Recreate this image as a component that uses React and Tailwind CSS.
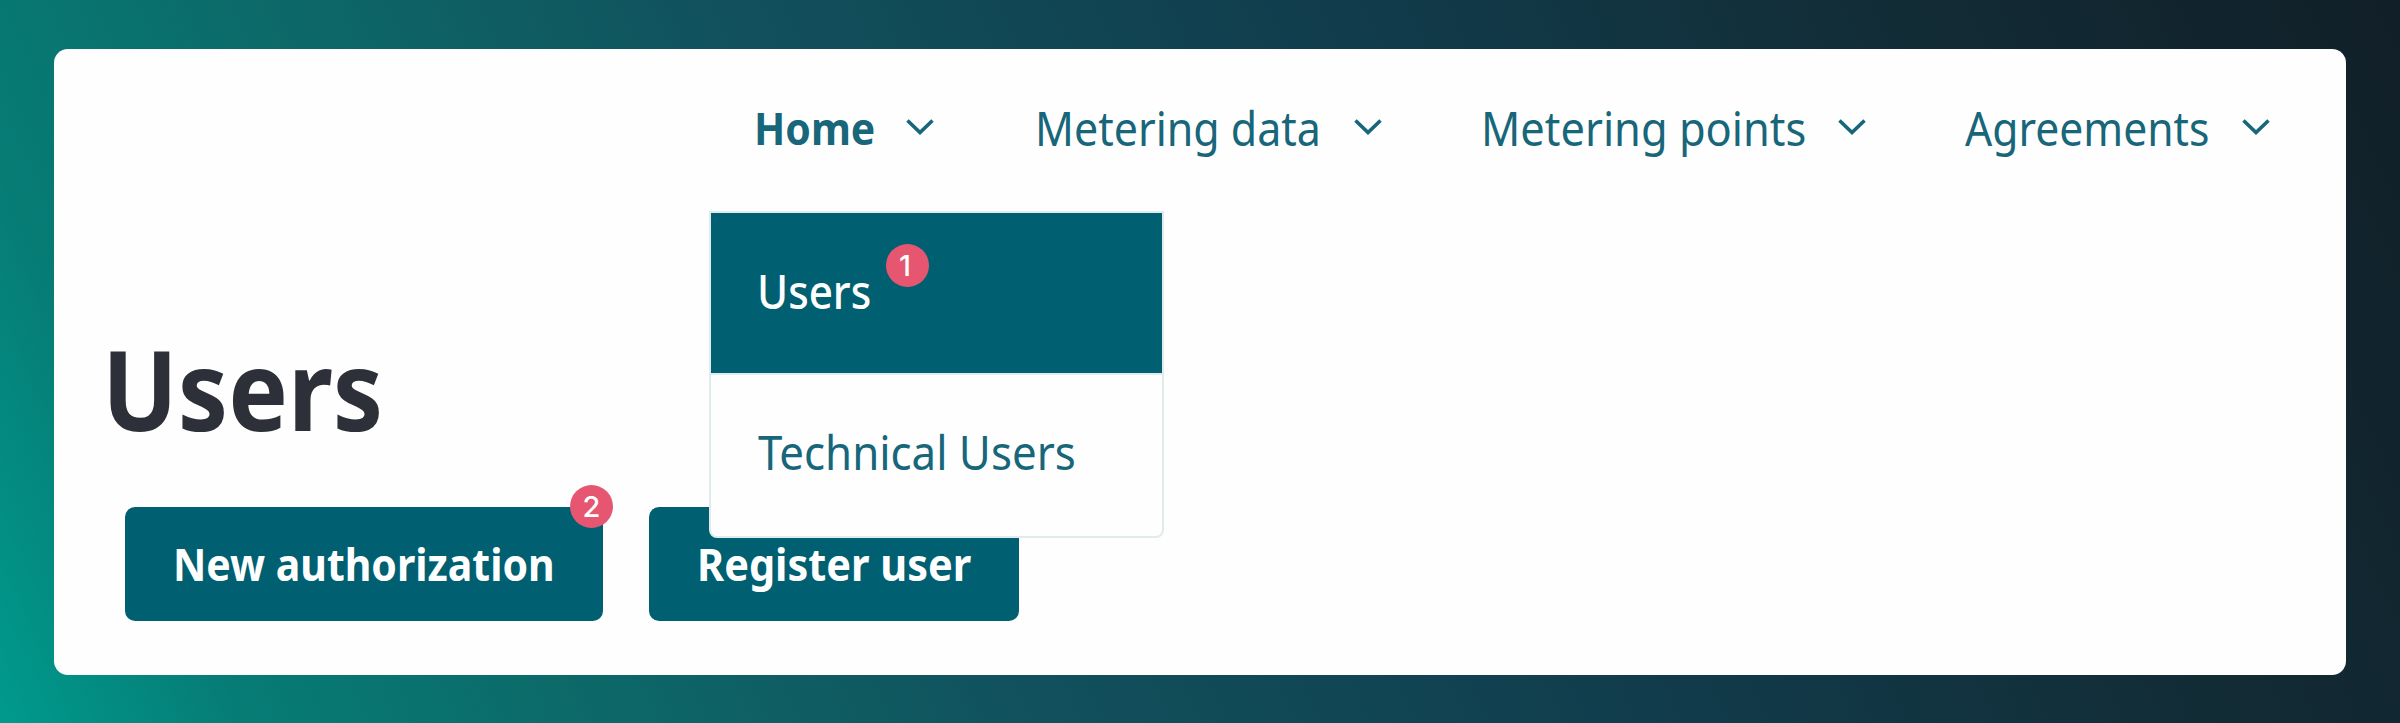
import { useLayoutEffect, useRef, useState } from "react";

// Sets its text to exactly the width of its box.
function FitText({ children, className }) {
  const box = useRef(null);
  const text = useRef(null);
  const [scale, setScale] = useState(1);
  useLayoutEffect(() => {
    setScale(box.current.offsetWidth / text.current.offsetWidth);
  }, [children]);
  return (
    <span ref={box} className={`block whitespace-nowrap ${className}`}>
      <span ref={text} className="inline-block origin-left" style={{ transform: `scaleX(${scale})` }}>
        {children}
      </span>
    </span>
  );
}

function Chevron() {
  return (
    <svg className="mb-[2px] h-[18px] w-[30px] shrink-0" viewBox="0 0 30 18" fill="none" stroke="#17667a" strokeWidth="3.6">
      <path d="M2.5 2.5 L15 14.5 L27.5 2.5" />
    </svg>
  );
}

function Badge({ children, className }) {
  return (
    <span
      className={`absolute flex size-[43px] items-center justify-center rounded-full bg-[#e75671] font-['Inter'] text-[29px] leading-none font-medium text-white ${className}`}
    >
      {children}
    </span>
  );
}

function Menu() {
  return (
    <div className="absolute top-[115px] -left-[45px] z-10 w-[455px] rounded-b-[8px] border-2 border-[#dfebed] bg-[#fefefe] text-[47px] leading-[64px]">
      <div className="relative flex h-[160px] items-center bg-[#006072] pb-[5px] pl-[46px] text-white">
        <FitText className="w-[114px] font-medium">Users</FitText>
        <Badge className="top-[31px] left-[175px] pr-[5px]">1</Badge>
      </div>
      <div className="flex h-[163px] items-center border-t-2 border-[#dfebed] pb-[7px] pl-[47px]">
        <FitText className="w-[318px]">Technical Users</FitText>
      </div>
    </div>
  );
}

export default function App() {
  return (
    <div className="h-[723px] w-[2400px] bg-[linear-gradient(66deg,#009a8d_0%,#067c75_9%,#0c6a69_21%,#11515d_38%,#113b4b_62%,#122d37_80%,#111f28_100%)] px-[54px] pt-[49px] font-['Noto_Sans',sans-serif]">
      <div className="h-[626px] w-[2292px] rounded-[14px] bg-[#fefefe] text-[#17667a]">
        <nav className="flex h-[240px] items-start pt-[47px] pl-[700px] text-[47px] leading-[64px]">
          <div className="relative flex w-[281px] items-center">
            <FitText className="w-[121px] text-[45px] font-bold">Home</FitText>
            <span className="ml-[30px]"><Chevron /></span>
            <Menu />
          </div>
          <div className="flex w-[446px] items-center">
            <FitText className="w-[286px]">Metering data</FitText>
            <span className="ml-[32px]"><Chevron /></span>
          </div>
          <div className="flex w-[484px] items-center">
            <FitText className="w-[325px]">Metering points</FitText>
            <span className="ml-[31px]"><Chevron /></span>
          </div>
          <div className="flex items-center">
            <FitText className="w-[244px]">Agreements</FitText>
            <span className="ml-[32px]"><Chevron /></span>
          </div>
        </nav>
        <h1 className="flex h-[218px] items-start pt-[19px] pl-[48px] text-[111px] leading-[160px] font-bold text-[#2d3038]">
          <FitText className="w-[281px]">Users</FitText>
        </h1>
        <div className="flex gap-[46px] pl-[71px] text-[44px] leading-[60px] font-bold text-white">
          <button className="relative flex h-[114px] w-[478px] items-center rounded-[10px] bg-[#006072] pl-[48px]">
            <FitText className="w-[382px]">New authorization</FitText>
            <Badge className="-top-[22px] left-[445px]">2</Badge>
          </button>
          <button className="flex h-[114px] w-[370px] items-center rounded-[10px] bg-[#006072] pl-[48px]">
            <FitText className="w-[274px]">Register user</FitText>
          </button>
        </div>
      </div>
    </div>
  );
}
